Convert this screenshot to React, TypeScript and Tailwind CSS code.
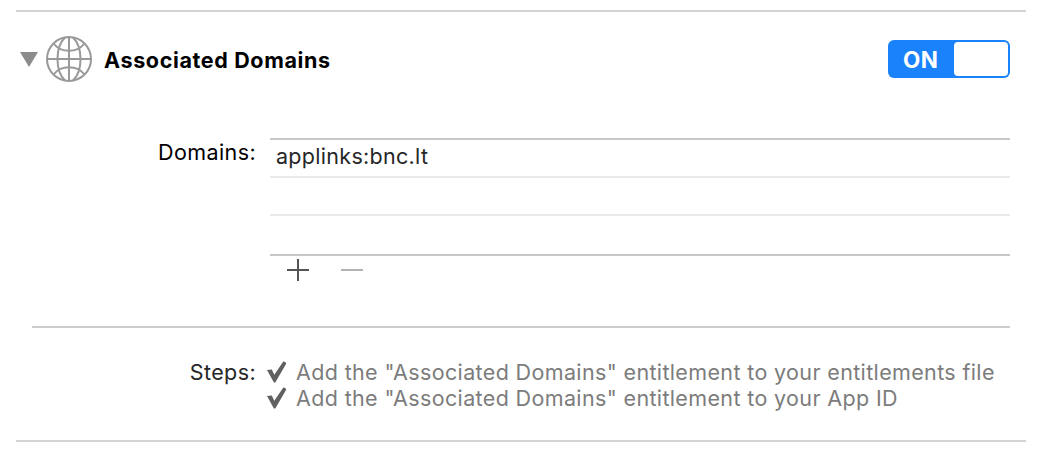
import React from "react";

function Globe() {
  return (
    <svg className="ml-2 size-[46px] shrink-0" viewBox="0 0 46 46" fill="none" stroke="#999999" strokeWidth="2">
      <circle cx="23" cy="23" r="22" />
      <path d="M23 1V45M1 23H45" />
      <path d="M19 1.5C9 11 9 35 19 44.5M27 1.5C37 11 37 35 27 44.5" />
      <path d="M8 8C15 17 31 17 38 8M8 38C15 29 31 29 38 38" />
    </svg>
  );
}

function Toggle() {
  return (
    <div className="ml-auto mt-1 flex h-[38px] w-[122px] rounded-[6px] bg-[#1a82fb] p-[2px]">
      <span className="w-[64px] pl-[13px] pt-[5px] text-[22.5px] leading-[26px] font-bold tracking-[0.5px] text-white">ON</span>
      <span className="h-[34px] w-[54px] rounded-[4px] bg-white" />
    </div>
  );
}

function Step({ children }: { children: React.ReactNode }) {
  return (
    <li className="flex h-[26px]">
      <svg className="mt-[2px] size-[22px] shrink-0" viewBox="0 0 22 22" fill="#606060">
        <path d="M1 9L5.8 8.5L8.3 13.7L17.3 .5Q19.3 .3 20.3 2.5L9.3 21.6H7.9Z" />
      </svg>
      <span className="ml-2 tracking-[0.36px] text-[#7c7c7c]">{children}</span>
    </li>
  );
}

export default function App() {
  return (
    <main className="h-[450px] w-[1048px] overflow-hidden bg-white px-4 pt-[10px] font-['Inter','Liberation_Sans',sans-serif] text-[21.5px] leading-[26px] whitespace-nowrap text-black">
      <section className="h-[432px] w-[1010px] border-y-2 border-[#d4d4d4]">
        <header className="flex h-[126px] pt-6 pr-4 pl-1">
          <svg className="mt-4 h-[15px] w-[18px] shrink-0" viewBox="0 0 18 15" fill="#8c8c8c">
            <path d="M0 0H18L9 15Z" />
          </svg>
          <Globe />
          <h1 className="mt-[11px] ml-3 font-bold tracking-[0.64px]">Associated Domains</h1>
          <Toggle />
        </header>
        <div className="flex h-[188px] pr-4">
          <div className="mt-px w-[240px] text-right tracking-[0.4px]">Domains:</div>
          <div className="ml-[14px] w-[740px]">
            <div className="h-[40px] border-t-2 border-b-2 border-t-[#c8c8c8] border-b-[#eaeaea] pt-[3px] pl-[6px] tracking-[0.3px] text-[#262626]">
              applinks:bnc.lt
            </div>
            <div className="h-[38px] border-b-2 border-[#eaeaea]" />
            <div className="h-[40px] border-b-2 border-[#c8c8c8]" />
            <div className="flex gap-8 pt-[3px] pl-[17px]">
              <svg className="size-[22px]" viewBox="0 0 22 22" fill="none" stroke="#555555" strokeWidth="2">
                <path d="M11 0V22M0 11H22" />
              </svg>
              <svg className="size-[22px]" viewBox="0 0 22 22" fill="none" stroke="#b2b2b2" strokeWidth="2">
                <path d="M0 11H22" />
              </svg>
            </div>
          </div>
        </div>
        <div className="mr-4 ml-4 flex border-t-2 border-[#cccccc] pt-[31px]">
          <div className="w-[224px] text-right tracking-[0.4px] text-[#262626]">Steps:</div>
          <ul className="ml-[10px]">
            <Step>Add the "Associated Domains" entitlement to your entitlements file</Step>
            <Step>Add the "Associated Domains" entitlement to your App ID</Step>
          </ul>
        </div>
      </section>
    </main>
  );
}
